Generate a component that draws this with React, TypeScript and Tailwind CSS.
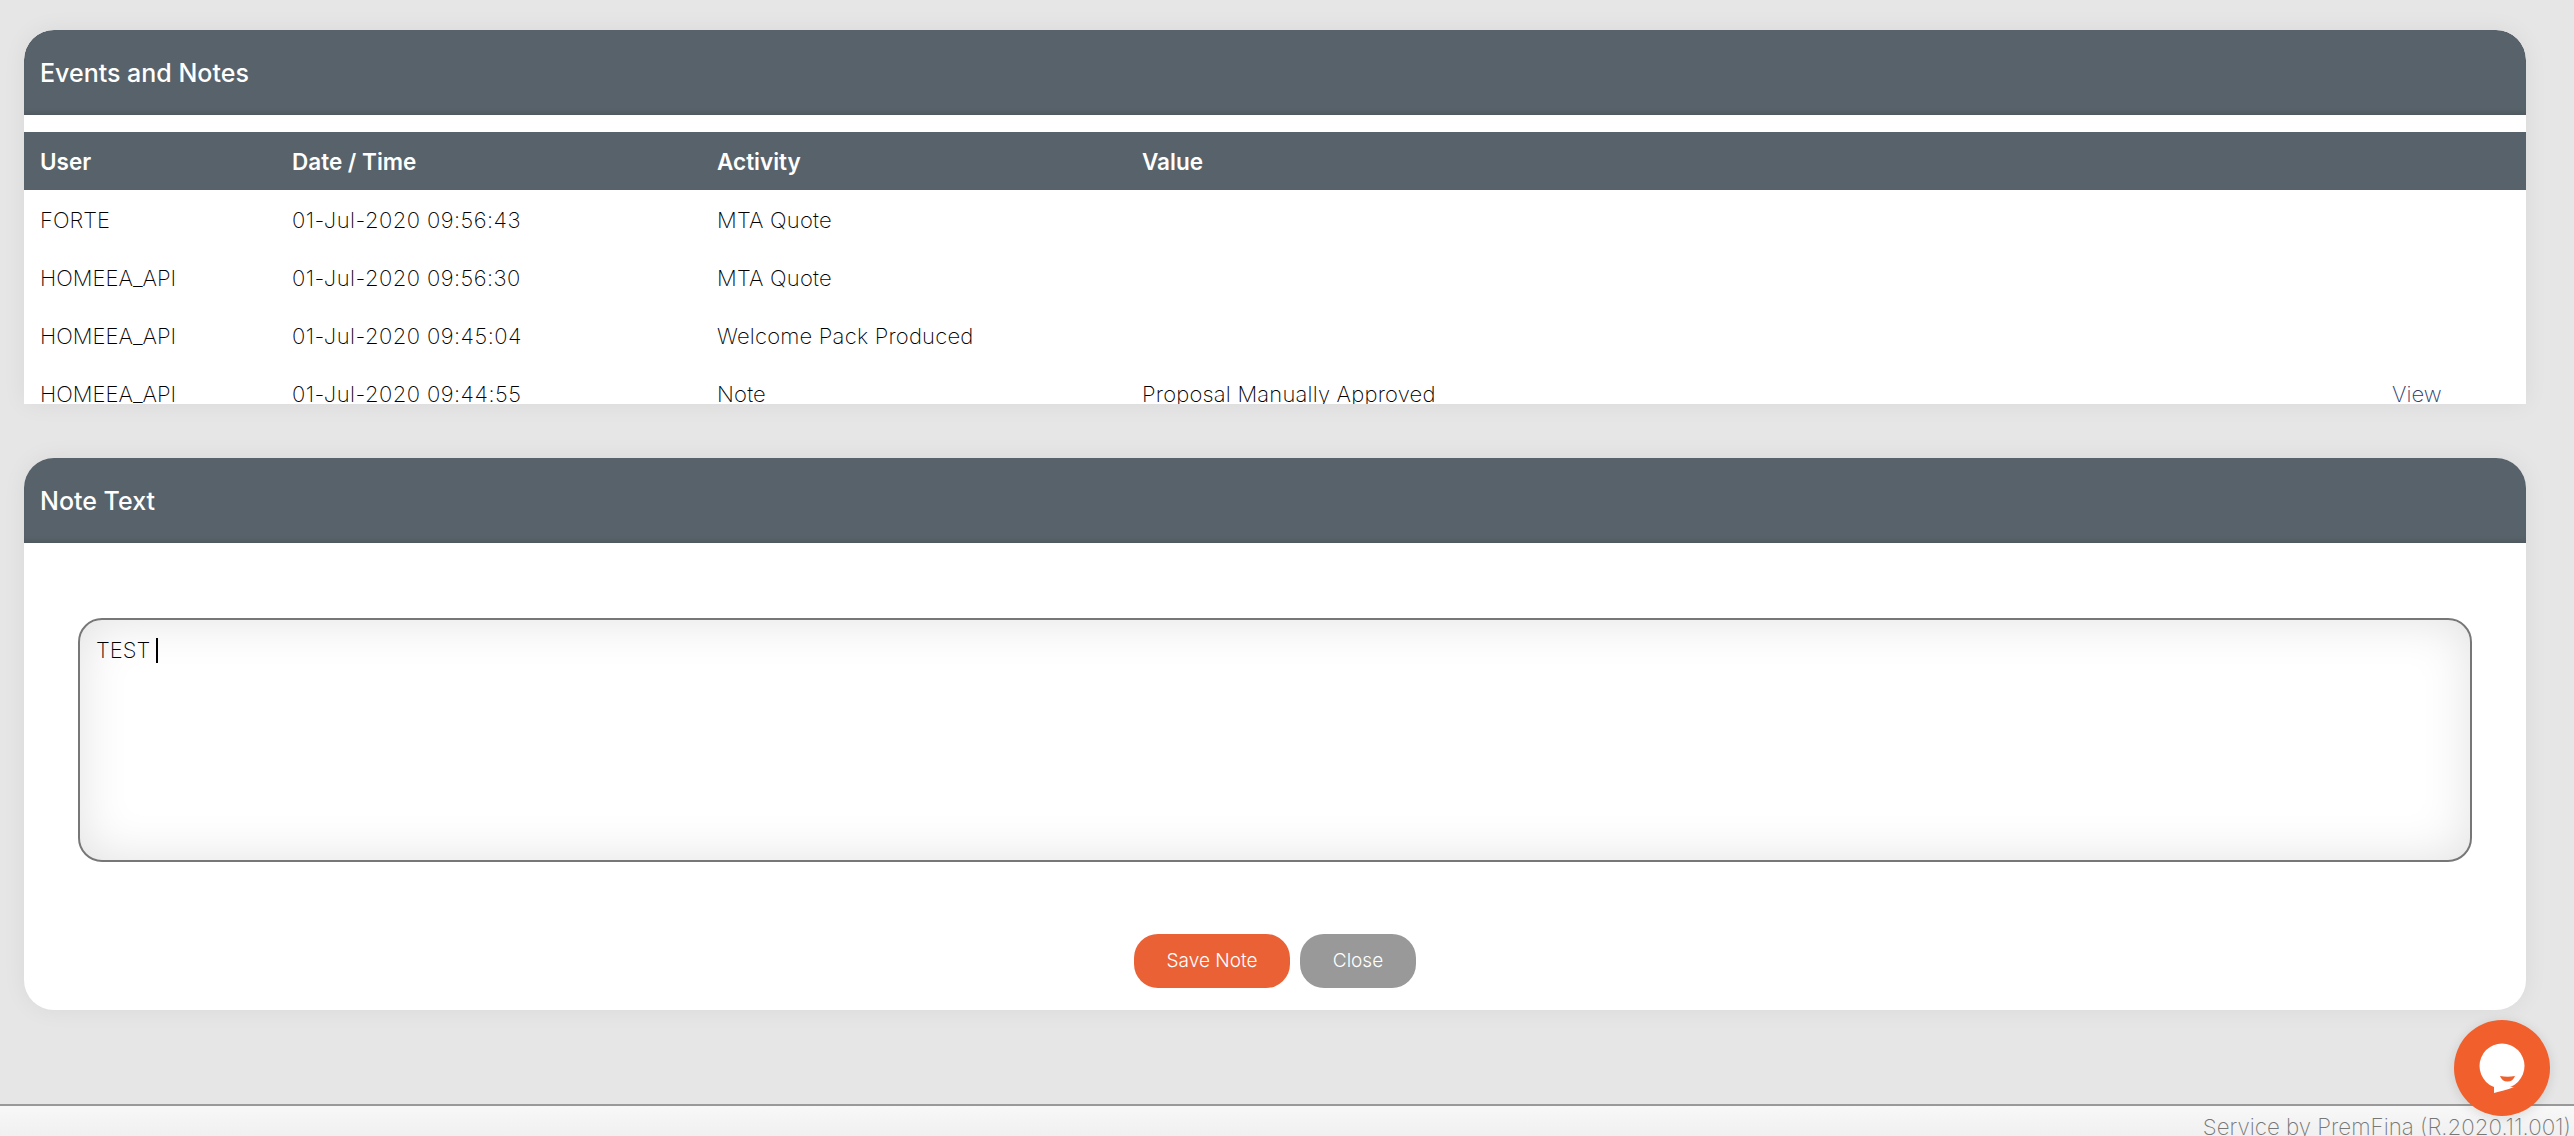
const rows = [
  { user: "FORTE", date: "01-Jul-2020 09:56:43", activity: "MTA Quote", value: "" },
  { user: "HOMEEA_API", date: "01-Jul-2020 09:56:30", activity: "MTA Quote", value: "" },
  { user: "HOMEEA_API", date: "01-Jul-2020 09:45:04", activity: "Welcome Pack Produced", value: "" },
  { user: "HOMEEA_API", date: "01-Jul-2020 09:44:55", activity: "Note", value: "Proposal Manually Approved", link: "View" },
];

function PanelHeader({ title }: { title: string }) {
  return (
    <div className="flex h-[85px] items-start rounded-t-[30px] bg-[#58626a] pl-4 pt-[28px] text-[25px] leading-[30px] font-medium text-white shadow-[inset_0_-5px_5px_-3px_rgba(0,0,0,0.12)]">
      {title}
    </div>
  );
}

export default function App() {
  return (
    <div className="relative flex h-[1136px] flex-col overflow-hidden bg-[#e6e6e6] font-['Inter',sans-serif] text-black">
      {/* Events */}
      <div className="pl-6 pr-12 pt-[30px]">
        <section className="h-[374px] overflow-hidden rounded-t-[30px] bg-white shadow-[0_0_24px_rgba(0,0,0,0.06)]">
          <PanelHeader title="Events and Notes" />
          <div className="mt-[17px] grid h-[58px] grid-cols-[252px_425px_425px_1fr] items-center bg-[#58626a] pl-4 pt-[1px] text-[22.5px] font-semibold text-white">
            <span>User</span>
            <span>Date / Time</span>
            <span>Activity</span>
            <span>Value</span>
          </div>
          {rows.map((r) => (
            <div
              key={r.date}
              className="grid h-[58px] grid-cols-[252px_425px_425px_1fr_134px] items-center pl-4 pt-[3px] text-[22px] font-extralight"
            >
              <span>{r.user}</span>
              <span className="tracking-[0.45px]">{r.date}</span>
              <span className="tracking-[0.2px]">{r.activity}</span>
              <span className="tracking-[0.2px]">{r.value}</span>
              <span className="text-[#2b3a6b]">{r.link}</span>
            </div>
          ))}
        </section>
      </div>

      {/* Note */}
      <div className="pl-6 pr-12 pt-[54px]">
        <section className="h-[552px] rounded-[30px] bg-white shadow-[0_0_24px_rgba(0,0,0,0.06)]">
          <PanelHeader title="Note Text" />
          <div className="px-[54px] pt-[75px]">
            <div className="h-[244px] rounded-[24px] border-2 border-[#777] px-4 pt-[13px] text-[22px] leading-[30px] font-extralight shadow-[inset_0_0_50px_rgba(0,0,0,0.12)]">
              TEST
              <span className="ml-[6px] inline-block h-[25px] w-[2px] translate-y-[5px] bg-black" />
            </div>
          </div>
          <div className="mt-[72px] flex justify-center gap-[10px] text-[19px] font-light text-white">
            <button className="h-[54px] w-[156px] rounded-[24px] bg-[#ea6136]">Save Note</button>
            <button className="h-[54px] w-[116px] rounded-[24px] bg-[#999]">Close</button>
          </div>
        </section>
      </div>

      {/* Footer */}
      <footer className="mt-[94px] flex h-[32px] shrink-0 justify-end border-t-2 border-[#999] bg-gradient-to-b from-[#f8f8f8] to-[#f0f0f0] pr-[3px] pt-[6px] text-[22.3px] leading-[30px] font-extralight text-[#777]">
        Service by PremFina (R.2020.11.001)
      </footer>

      {/* Chat launcher */}
      <button className="absolute left-[2454px] top-[1020px] flex h-[96px] w-[96px] items-center justify-center rounded-full bg-[#f05f2c] shadow-[0_2px_12px_rgba(0,0,0,0.12)]">
        <svg width="46" height="50" viewBox="0 0 46 50">
          <circle cx="23" cy="23" r="22.5" fill="#fff" />
          <path d="M15 43V50C21 48 28 47 35 44z" fill="#fff" />
          <path d="M21 33Q28.5 34.5 36 33Q34 38.5 28.5 38.5Q23 38.5 21 33z" fill="#f05f2c" />
        </svg>
      </button>
    </div>
  );
}
